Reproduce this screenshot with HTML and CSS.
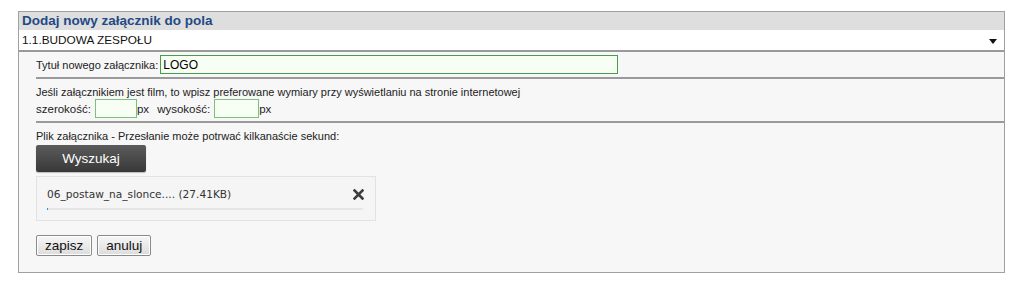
FILE: index.html
```html
<!DOCTYPE html>
<html lang="pl">
<head>
    <meta charset="UTF-8">
    <title>Dodaj nowy załącznik</title>
    <link rel="stylesheet" href="styles.css">
</head>
<body>
    <div class="panel">
        <div class="panel-head">Dodaj nowy załącznik do pola</div>
        <div class="field-select">
            <span>1.1.BUDOWA ZESPOŁU</span>
            <span class="arrow"></span>
        </div>

        <form class="panel-body" onsubmit="return false">
            <div class="row-title">
                <label for="ftytul">Tytuł nowego załącznika:</label>
                <input type="text" id="ftytul" class="txt txt-title" value="LOGO">
            </div>

            <div class="section">
                <p>Jeśli załącznikiem jest film, to wpisz preferowane wymiary przy wyświetlaniu na stronie internetowej</p>
                <div class="dims">
                    <label for="fszer">szerokość:</label>
                    <input type="text" id="fszer" class="txt txt-dim"><span class="unit">px</span>
                    <label for="fwys">wysokość:</label>
                    <input type="text" id="fwys" class="txt txt-dim wide"><span class="unit">px</span>
                </div>
            </div>

            <div class="section last">
                <p>Plik załącznika - Przesłanie może potrwać kilkanaście sekund:</p>
                <button type="button" class="btn-dark">Wyszukaj</button>

                <div class="file-box">
                    <div class="file-top">
                        <span class="file-name">06_postaw_na_slonce.... (27.41KB)</span>
                        <svg class="file-del" width="11" height="11" viewBox="0 0 11 11">
                            <path d="M1.5 1.5 L9.5 9.5 M9.5 1.5 L1.5 9.5" stroke="#3d3d3d" stroke-width="2.6" stroke-linecap="square"/>
                        </svg>
                    </div>
                    <div class="progress"><div class="progress-fill" style="width: 1px"></div></div>
                </div>

                <div class="actions">
                    <button type="submit" class="btn">zapisz</button>
                    <button type="button" class="btn">anuluj</button>
                </div>
            </div>
        </form>
    </div>
</body>
</html>
```

FILE: styles.css
```css
body {
    margin: 0;
    padding: 11px 19px 0 18px;
    background: #fff;
    font-family: "Liberation Sans", Arial, sans-serif;
    font-size: 11px;
    color: #222;
}
.panel {
    border: 1px solid #a0a0a0;
    background: #f7f7f7;
}
.panel-head {
    background: #dedede;
    color: #1e4a85;
    font-weight: bold;
    font-size: 13.5px;
    height: 18px;
    line-height: 18px;
    padding-left: 3px;
}
.field-select {
    display: flex;
    justify-content: space-between;
    align-items: center;
    background: #fff;
    height: 20px;
    padding: 0 7px 0 3px;
    font-size: 11.8px;
    color: #111;
    border-bottom: 2px solid #9a9a9a;
}
.arrow {
    width: 0;
    height: 0;
    border-left: 4px solid transparent;
    border-right: 4px solid transparent;
    border-top: 5px solid #111;
    margin-top: 2px;
}
.panel-body {
    padding-left: 17px;
}
.row-title {
    display: flex;
    align-items: center;
    height: 25px;
    border-bottom: 2px solid #9a9a9a;
}
.row-title label {
    margin-right: 2px;
}
.txt {
    box-sizing: border-box;
    height: 19px;
    border: 1px solid #4a9c4a;
    background: #f7fff5;
    font-family: inherit;
    font-size: 12px;
    padding: 0 2px;
    outline: none;
}
.txt-title {
    width: 458px;
}
.section {
    border-bottom: 2px solid #9a9a9a;
    padding-top: 7px;
    height: 35px;
}
.section p {
    margin: 0;
    line-height: 13px;
}
.dims {
    display: flex;
    align-items: center;
    margin-top: 0;
    font-size: 11.5px;
}
.dims label {
    margin-right: 4px;
}
.txt-dim {
    width: 42px;
    border-color: #7cc27c;
}
.txt-dim.wide {
    width: 45px;
}
.unit {
    margin-right: 8px;
}
.section.last {
    border-bottom: none;
    height: auto;
    padding-bottom: 16px;
    padding-top: 7px;
}
.btn-dark {
    display: block;
    margin-top: 2px;
    width: 110px;
    height: 27px;
    border: none;
    border-radius: 2px;
    background: linear-gradient(#5c5c5c, #383838);
    color: #fff;
    font-family: inherit;
    font-size: 13.5px;
    box-shadow: 0 1px 1px rgba(0,0,0,0.25);
}
.file-box {
    margin-top: 4px;
    width: 340px;
    height: 45px;
    box-sizing: border-box;
    border: 1px solid #e2e2e2;
    background: #f5f5f5;
    padding: 11px 10px 0 10px;
}
.file-top {
    display: flex;
    justify-content: space-between;
    align-items: center;
}
.file-name {
    font-family: "DejaVu Sans", Verdana, sans-serif;
    font-size: 10.6px;
    color: #333;
}
.file-del {
    margin-right: 1px;
}
.progress {
    margin-top: 8px;
    height: 2px;
    background: #e6e6e6;
    margin-right: 2px;
}
.progress-fill {
    height: 2px;
    background: #3b8fd6;
}
.actions {
    margin-top: 14px;
    display: flex;
    gap: 5px;
}
.btn {
    height: 21px;
    padding: 0 8px;
    border: 1px solid #8a8a8a;
    border-radius: 2px;
    background: linear-gradient(#f7f7f7, #dcdcdc);
    font-family: inherit;
    font-size: 13.5px;
    color: #111;
    box-shadow: inset 0 0 0 1px #fff;
}
```
